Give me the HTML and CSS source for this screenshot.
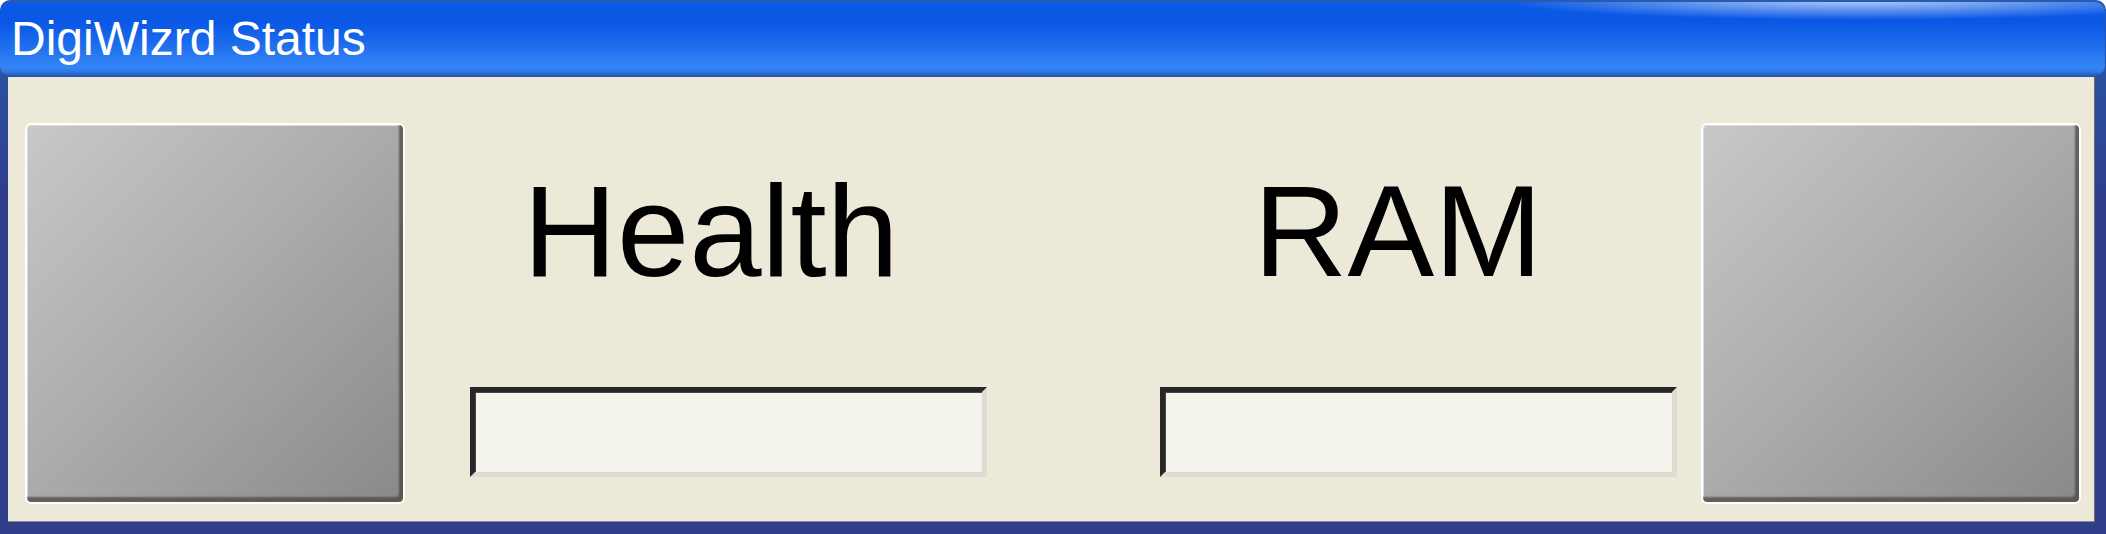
FILE: index.html
```html
<!DOCTYPE html>
<html>
<head>
<meta charset="utf-8">
<title>DigiWizrd Status</title>
<link rel="stylesheet" href="styles.css">
</head>
<body>
<div class="window">
  <div class="titlebar"><span class="title">DigiWizrd Status</span></div>
  <div class="content">
    <div class="sqbtn"></div>
    <div class="col col-health">
      <div class="label">Health</div>
      <div class="bar"></div>
    </div>
    <div class="col col-ram">
      <div class="label">RAM</div>
      <div class="bar"></div>
    </div>
    <div class="sqbtn sqbtn-right"></div>
  </div>
</div>
</body>
</html>
```

FILE: styles.css
```css
html, body {
  margin: 0;
  padding: 0;
  background: #ffffff;
}
body {
  width: 2106px;
  height: 534px;
  overflow: hidden;
  font-family: "Liberation Sans", Arial, sans-serif;
}
.window {
  width: 2106px;
  height: 534px;
  box-sizing: border-box;
  background: linear-gradient(to bottom, #2a5ab0 0px, #2a50a0 80px, #2f3d8b 200px, #2f3d8b 100%);
  border-radius: 10px 10px 0 0;
  padding-top: 2px;
  display: flex;
  flex-direction: column;
}
.titlebar {
  height: 74px;
  box-sizing: border-box;
  border-radius: 10px;
  padding: 13px 0 0 11px;
  background:
    radial-gradient(ellipse 360px 20px at 1860px -2px, rgba(255,255,255,0.7), rgba(255,255,255,0) 100%),
    linear-gradient(to bottom, #0b5be6 0px, #0957e4 20px, #1a6aec 40px, #2c7cf2 56px, #3384f5 66px, #2f76e0 70px, #2456b0 74px);
  margin-right: 1px;
}
.title {
  display: block;
  color: #ffffff;
  font-size: 48px;
  line-height: 48px;
}
.content {
  margin: 1px 11px 0 8px;
  height: 445px;
  box-sizing: border-box;
  background: #ece9d8;
  border-right: 1px solid #6c6c64;
  border-bottom: 1px solid #8a8a86;
  display: flex;
  align-items: flex-start;
  padding: 46px 0 0 17px;
}
.sqbtn {
  width: 380px;
  height: 381px;
  flex: none;
  box-sizing: border-box;
  border: 2px solid #ffffff;
  border-radius: 6px;
  background: linear-gradient(135deg, #c8c8c8 0%, #aaaaaa 50%, #898989 100%);
  box-shadow: inset -4px -5px 2px rgba(70, 65, 58, 0.7), inset 1px 1px 0 #d8d8d8;
}
.sqbtn-right {
  margin-left: 24px;
}
.col {
  width: 517px;
  flex: none;
  display: flex;
  flex-direction: column;
  align-items: center;
  padding-top: 43px;
}
.col-health {
  margin-left: 65px;
}
.col-ram {
  margin-left: 173px;
}
.label {
  font-size: 130px;
  line-height: 130px;
  color: #000000;
  white-space: nowrap;
}
.col-health .label {
  margin-left: -35px;
}
.col-ram .label {
  margin-left: -41px;
}
.bar {
  margin-top: 91px;
  width: 517px;
  height: 90px;
  box-sizing: border-box;
  background: #f4f4ec;
  border-style: solid;
  border-width: 5px;
  border-color: #262626 #dcdcd4 #dcdcd4 #262626;
  box-shadow: inset 1px 1px 0 #444444;
}
```
